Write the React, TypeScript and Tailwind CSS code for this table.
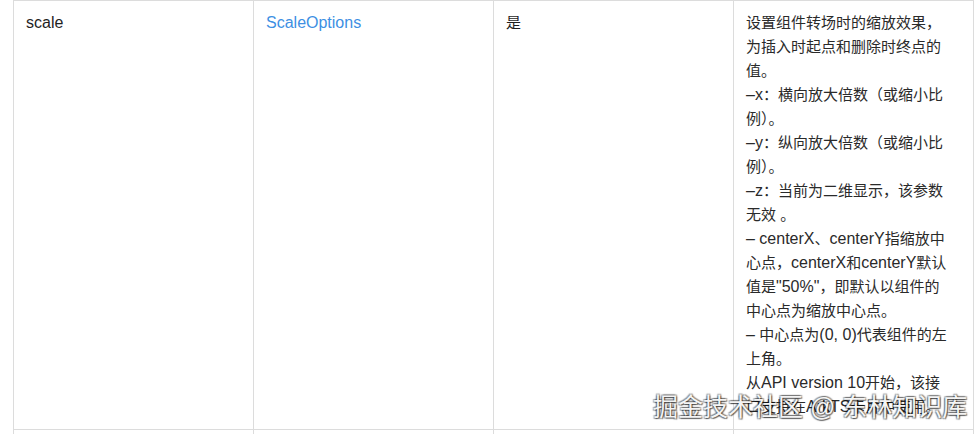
import React from "react";

const L = ({ children }: { children: React.ReactNode }) => (
  <span className="text-[16px]">{children}</span>
);

const lines: React.ReactNode[] = [
  <>设置组件转场时的缩放效果，</>,
  <>为插入时起点和删除时终点的</>,
  <>值。</>,
  <><L>–x</L>：横向放大倍数（或缩小比</>,
  <>例）。</>,
  <><L>–y</L>：纵向放大倍数（或缩小比</>,
  <>例）。</>,
  <><L>–z</L>：当前为二维显示，该参数</>,
  <>无效 。</>,
  <><L>– centerX</L>、<L>centerY</L>指缩放中</>,
  <>心点，<L>centerX</L>和<L>centerY</L>默认</>,
  <>值是<L>"50%"</L>，即默认以组件的</>,
  <>中心点为缩放中心点。</>,
  <><L>– </L>中心点为<L>(0, 0)</L>代表组件的左</>,
  <>上角。</>,
  <>从<L>API version 10</L>开始，该接</>,
  <>口支持在<L>ArkTS</L>卡片中使用。</>,
];

export default function App() {
  return (
    <div
      className="relative h-[434px] w-[979px] overflow-hidden bg-white pl-[13px] text-[#1f1f1f]"
      style={{ fontFamily: '"Liberation Sans", "Noto Sans CJK SC", sans-serif' }}
    >
      <table className="w-[960px] table-fixed border-collapse text-[15px] leading-[24px]">
        <tbody>
          <tr className="align-top">
            <td className="w-[240px] border border-[#dcdcdc] px-3 pt-[10px] pb-[10px]">
              <L>scale</L>
            </td>
            <td className="w-[240px] border border-[#dcdcdc] px-3 pt-[10px] pb-[10px]">
              <span className="text-[16px] text-[#3d8fe3]">ScaleOptions</span>
            </td>
            <td className="w-[240px] border border-[#dcdcdc] px-3 pt-[10px] pb-[10px]">是</td>
            <td className="w-[240px] border border-[#dcdcdc] px-3 pt-[10px] pb-[10px] text-[#2a2a2a]">
              {lines.map((l, i) => (
                <div key={i} className="whitespace-nowrap">
                  {l}
                </div>
              ))}
            </td>
          </tr>
          <tr>
            <td className="h-[40px] border border-[#dcdcdc]"></td>
            <td className="h-[40px] border border-[#dcdcdc]"></td>
            <td className="h-[40px] border border-[#dcdcdc]"></td>
            <td className="h-[40px] border border-[#dcdcdc]"></td>
          </tr>
        </tbody>
      </table>
      <div
        className="absolute left-[653px] top-[391px] whitespace-nowrap text-[25px] leading-[32px] text-[#f4f4f4]"
        style={{
          textShadow:
            "1px 1px 1px rgba(0,0,0,0.55), -1px -1px 1px rgba(0,0,0,0.35), 1px -1px 1px rgba(0,0,0,0.35), -1px 1px 1px rgba(0,0,0,0.35)",
        }}
      >
        掘金技术社区 @ 东林知识库
      </div>
    </div>
  );
}
